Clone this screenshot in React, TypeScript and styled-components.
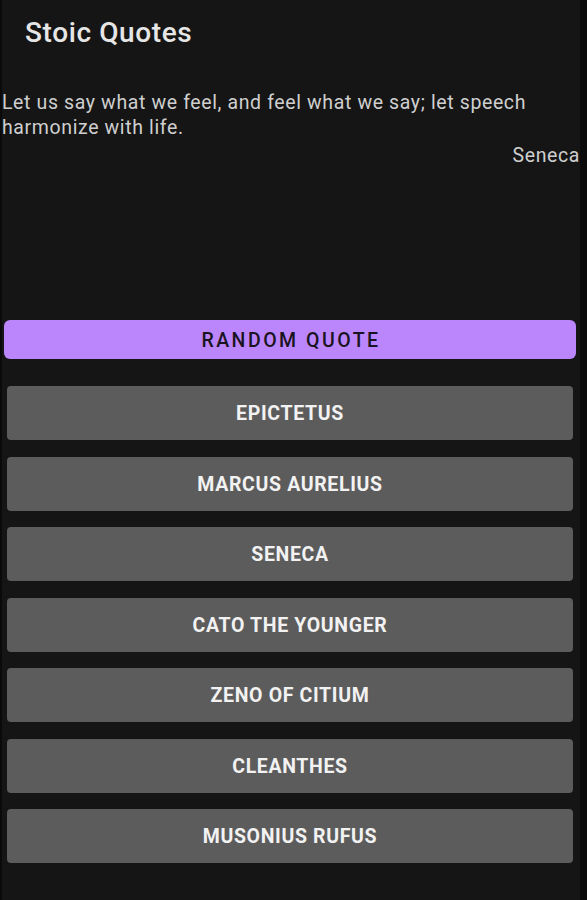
import React from "react";
import styled, { createGlobalStyle } from "styled-components";

const Global = createGlobalStyle`
  html, body {
    margin: 0;
    padding: 0;
    background: #0a0a0a;
  }
  body {
    font-family: Roboto, "Noto Sans", "Liberation Sans", sans-serif;
  }
`;

const Screen = styled.div`
  width: 578px;
  margin-left: 2px;
  min-height: 900px;
  background: #151515;
  display: flex;
  flex-direction: column;
`;

const Title = styled.h1`
  margin: 0;
  padding: 17px 0 0 23px;
  font-size: 28px;
  line-height: 32px;
  font-weight: 500;
  letter-spacing: 0.6px;
  color: #e6e6e6;
`;

const QuoteBlock = styled.section`
  margin-top: 41px;
  display: flex;
  flex-direction: column;
`;

const QuoteText = styled.p`
  margin: 0;
  font-size: 19.5px;
  line-height: 25px;
  letter-spacing: 0.62px;
  color: #cfcfcf;
`;

const Author = styled.p`
  margin: 4px 0 0;
  font-size: 19.5px;
  line-height: 24px;
  letter-spacing: 0.6px;
  color: #cfcfcf;
  text-align: right;
`;

const RandomButton = styled.button`
  margin: 152px 4px 0 2px;
  height: 39px;
  border: none;
  border-radius: 6px;
  background: #bb86fc;
  color: #1a1420;
  font-family: Roboto, "Noto Sans", sans-serif;
  font-size: 19.5px;
  font-weight: 500;
  letter-spacing: 2.5px;
  text-transform: uppercase;
  display: flex;
  align-items: center;
  justify-content: center;
  padding: 2px 0 0 2px;
`;

const List = styled.nav`
  margin: 27px 7px 0 5px;
  display: flex;
  flex-direction: column;
  gap: 16.5px;
`;

const PhilosopherButton = styled.button`
  height: 54px;
  border: none;
  border-radius: 4px;
  background: #5c5c5c;
  color: #f2f2f2;
  font-family: Roboto, "Noto Sans", sans-serif;
  font-size: 19.5px;
  font-weight: 700;
  letter-spacing: 0.65px;
  text-transform: uppercase;
  display: flex;
  align-items: center;
  justify-content: center;
  padding: 1px 0 0;
`;

const philosophers = [
  "Epictetus",
  "Marcus Aurelius",
  "Seneca",
  "Cato the Younger",
  "Zeno of Citium",
  "Cleanthes",
  "Musonius Rufus",
];

export default function App() {
  return (
    <>
      <Global />
      <Screen>
        <Title>Stoic Quotes</Title>
        <QuoteBlock>
          <QuoteText>
            Let us say what we feel, and feel what we say; let speech harmonize with life.
          </QuoteText>
          <Author>Seneca</Author>
        </QuoteBlock>
        <RandomButton>Random Quote</RandomButton>
        <List>
          {philosophers.map((p) => (
            <PhilosopherButton key={p}>{p}</PhilosopherButton>
          ))}
        </List>
      </Screen>
    </>
  );
}
